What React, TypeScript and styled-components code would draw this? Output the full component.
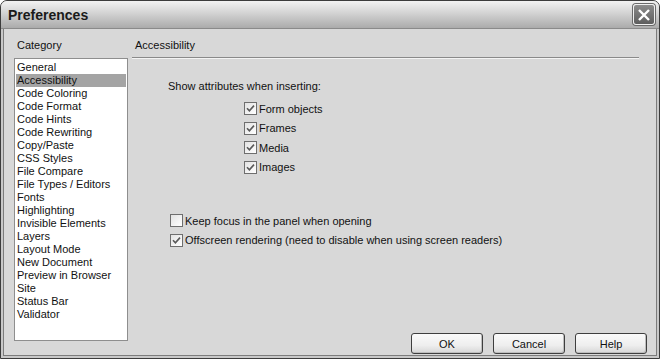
import styled, { createGlobalStyle } from "styled-components";

const GlobalStyle = createGlobalStyle`
  html, body {
    margin: 0;
    padding: 0;
    background: #ffffff;
  }
  body {
    font-family: "Liberation Sans", Arial, sans-serif;
    font-size: 11px;
    color: #111;
  }
`;

const Window = styled.div`
  width: 660px;
  height: 359px;
  box-sizing: border-box;
  display: flex;
  flex-direction: column;
  background: #c8c8c8;
  border: 1px solid #3c3c3c;
  border-radius: 7px 7px 0 0;
  overflow: hidden;
`;

const TitleBar = styled.div`
  height: 27px;
  flex: none;
  display: flex;
  align-items: center;
  justify-content: space-between;
  padding: 0 4px 0 7px;
  background: linear-gradient(#f2f2f2 0%, #dadada 35%, #bdbdbd 75%, #ababab 100%);
  border-bottom: 1px solid #8a8a8a;
`;

const Title = styled.span`
  font-family: "Liberation Sans", Arial, sans-serif;
  font-weight: bold;
  font-size: 14px;
  color: #1a1a1a;
`;

const CloseBtn = styled.button`
  width: 22px;
  height: 21px;
  padding: 0;
  border: 1px solid #f0f0f0;
  border-radius: 3px;
  background: linear-gradient(#8c8c8c, #5e5e5e);
  box-shadow: 0 0 0 1px #6a6a6a;
  display: flex;
  align-items: center;
  justify-content: center;
`;

const Body = styled.div`
  flex: 1;
  display: flex;
  gap: 4px;
  margin: 0 2px 2px;
  padding: 9px 9px 1px 10px;
  background: #d8d8d8;
  border: 1px solid #7c7c7c;
  border-top: none;
`;

const Sidebar = styled.div`
  width: 114px;
  display: flex;
  flex-direction: column;
`;

const Label = styled.div`
  height: 20px;
  line-height: 14px;
  padding-left: 3px;
  font-size: 11px;
`;

const List = styled.ul`
  flex: 1;
  margin: 0 0 13px;
  padding: 2px 1px;
  list-style: none;
  background: #ffffff;
  border: 1px solid #8e8e8e;
`;

const Item = styled.li<{ $active?: boolean }>`
  height: 13px;
  line-height: 13px;
  padding-left: 1px;
  font-size: 11px;
  background: ${(p) => (p.$active ? "#a4a4a4" : "transparent")};
`;

const Main = styled.div`
  flex: 1;
  display: flex;
  flex-direction: column;
`;

const Header = styled.div`
  height: 19px;
  line-height: 14px;
  padding-left: 3px;
  margin-right: 8px;
  font-size: 11px;
  border-bottom: 1px solid #8a8a8a;
  box-shadow: 0 1px 0 #f4f4f4;
`;

const Content = styled.div`
  flex: 1;
  display: flex;
  flex-direction: column;
  padding: 21px 0 0 36px;
`;

const Prompt = styled.div`
  font-size: 11px;
  line-height: 14px;
  margin-bottom: 9px;
`;

const Group = styled.div<{ $indent: number }>`
  display: flex;
  flex-direction: column;
  gap: 6px;
  padding-left: ${(p) => p.$indent}px;
  margin-bottom: ${(p) => (p.$indent ? 40 : 0)}px;
`;

const Row = styled.label`
  display: flex;
  align-items: center;
  gap: 2px;
  height: 13.5px;
  font-size: 11px;
`;

const Box = styled.span`
  width: 11px;
  height: 11px;
  flex: none;
  border: 1px solid #6e6e6e;
  background: linear-gradient(135deg, #e2e2e2, #ffffff);
  display: flex;
  align-items: center;
  justify-content: center;
`;

const Footer = styled.div`
  display: flex;
  justify-content: flex-end;
  gap: 10px;
`;

const Button = styled.button`
  width: 72px;
  height: 21px;
  font-family: "Liberation Sans", Arial, sans-serif;
  font-size: 11px;
  color: #111;
  border: 1px solid #3e3e3e;
  border-radius: 3px;
  background: linear-gradient(#fafafa 0%, #eeeeee 60%, #d6d6d6 100%);
  box-shadow: inset -1px -1px 0 #bdbdbd;
`;

const categories = [
  "General",
  "Accessibility",
  "Code Coloring",
  "Code Format",
  "Code Hints",
  "Code Rewriting",
  "Copy/Paste",
  "CSS Styles",
  "File Compare",
  "File Types / Editors",
  "Fonts",
  "Highlighting",
  "Invisible Elements",
  "Layers",
  "Layout Mode",
  "New Document",
  "Preview in Browser",
  "Site",
  "Status Bar",
  "Validator",
];

const Check = ({ checked }: { checked: boolean }) => (
  <Box>
    {checked && (
      <svg width="9" height="9" viewBox="0 0 9 9">
        <path d="M1 4.2 L3.4 6.8 L8 1.6" fill="none" stroke="#5a5a5a" strokeWidth="1.6" />
      </svg>
    )}
  </Box>
);

const Option = ({ text, checked }: { text: string; checked: boolean }) => (
  <Row>
    <Check checked={checked} />
    <span>{text}</span>
  </Row>
);

export default function App() {
  return (
    <>
      <GlobalStyle />
      <Window>
        <TitleBar>
          <Title>Preferences</Title>
          <CloseBtn aria-label="Close">
            <svg width="14" height="14" viewBox="0 0 14 14">
              <path d="M2 2 L12 12 M12 2 L2 12" stroke="#ffffff" strokeWidth="2.4" />
            </svg>
          </CloseBtn>
        </TitleBar>
        <Body>
          <Sidebar>
            <Label>Category</Label>
            <List>
              {categories.map((c) => (
                <Item key={c} $active={c === "Accessibility"}>
                  {c}
                </Item>
              ))}
            </List>
          </Sidebar>
          <Main>
            <Header>Accessibility</Header>
            <Content>
              <Prompt>Show attributes when inserting:</Prompt>
              <Group $indent={76}>
                <Option text="Form objects" checked />
                <Option text="Frames" checked />
                <Option text="Media" checked />
                <Option text="Images" checked />
              </Group>
              <Group $indent={2}>
                <Option text="Keep focus in the panel when opening" checked={false} />
                <Option text="Offscreen rendering (need to disable when using screen readers)" checked />
              </Group>
            </Content>
            <Footer>
              <Button>OK</Button>
              <Button>Cancel</Button>
              <Button>Help</Button>
            </Footer>
          </Main>
        </Body>
      </Window>
    </>
  );
}
